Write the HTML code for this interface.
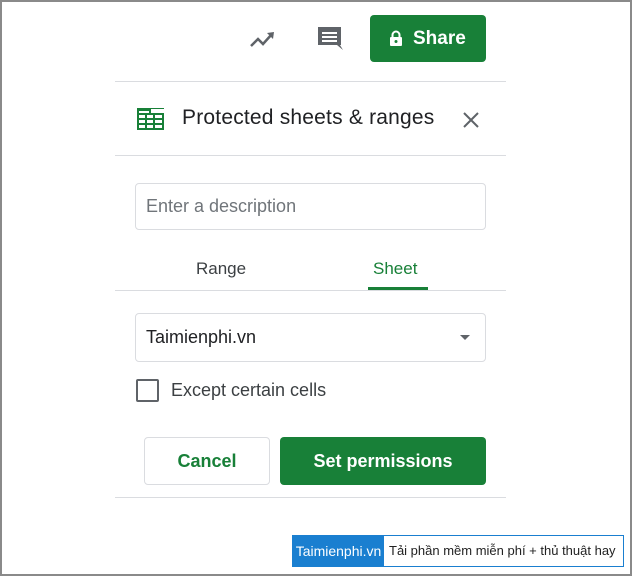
<!DOCTYPE html>
<html><head><style>
body{margin:0;width:632px;height:576px;position:relative;background:#fff;font-family:"Liberation Sans",sans-serif;overflow:hidden}
.frame{position:absolute;left:0;top:0;width:628px;height:572px;border:2px solid #8a8a8a}
.abs{position:absolute;white-space:nowrap}
.line{position:absolute;left:115px;width:391px;height:1px;background:#dadce0}
</style></head><body>
<div class="frame"></div>
<svg class="abs" style="left:249px;top:29px" width="28" height="20" viewBox="0 0 28 20"><path d="M2 17 L9 10 L14 15 L23 5" fill="none" stroke="#5f6368" stroke-width="2.5"/><path d="M18 4 L25 3 L24 10 Z" fill="#5f6368"/></svg>
<svg class="abs" style="left:316px;top:26px" width="28" height="26" viewBox="0 0 28 26"><path d="M2 1 H25 V19 H24 L27 24 L21 19 H2 Z" fill="#5f6368"/><rect x="6" y="6" width="15" height="2" fill="#fff"/><rect x="6" y="10" width="15" height="2" fill="#fff"/><rect x="6" y="14" width="15" height="2" fill="#fff"/></svg>
<div class="abs" style="left:370px;top:15px;width:116px;height:47px;background:#188038;border-radius:4px;color:#fff;font-weight:bold;font-size:19px;line-height:47px"><svg class="abs" style="left:19px;top:15px" width="14" height="17" viewBox="0 0 14 17"><path d="M3.5 7 V5 a3.5 3.5 0 0 1 7 0 V7" fill="none" stroke="#fff" stroke-width="2"/><rect x="1" y="7" width="12" height="9" rx="1" fill="#fff"/><circle cx="7" cy="11.5" r="1.5" fill="#188038"/></svg><span style="position:absolute;left:43px">Share</span></div>
<div class="line" style="top:81px"></div>
<svg class="abs" style="left:137px;top:108px" width="27" height="22" viewBox="0 0 27 22"><rect x="0" y="0" width="27" height="22" fill="#188038"/><g fill="#fff"><rect x="2" y="3" width="10" height="2"/><rect x="2" y="7" width="6" height="3"/><rect x="10" y="7" width="6" height="3"/><rect x="18" y="7" width="7" height="3"/><rect x="2" y="12" width="6" height="3"/><rect x="10" y="12" width="6" height="3"/><rect x="18" y="12" width="7" height="3"/><rect x="2" y="17" width="6" height="3"/><rect x="10" y="17" width="6" height="3"/><rect x="18" y="17" width="7" height="3"/></g><rect x="14" y="0" width="13" height="5" fill="#fff"/><rect x="14" y="0" width="13" height="1" fill="#188038"/></svg>
<div class="abs" style="left:182px;top:106px;font-size:21px;letter-spacing:0.2px;color:#202124">Protected sheets &amp; ranges</div>
<svg class="abs" style="left:463px;top:112px" width="16" height="16" viewBox="0 0 16 16"><path d="M1 1 L15 15 M15 1 L1 15" stroke="#5f6368" stroke-width="2"/></svg>
<div class="line" style="top:155px"></div>
<div class="abs" style="left:135px;top:183px;width:349px;height:45px;border:1px solid #dadce0;border-radius:4px"></div>
<div class="abs" style="left:146px;top:196px;font-size:18px;color:#70757a">Enter a description</div>
<div class="abs" style="left:196px;top:259px;font-size:17px;color:#3c4043">Range</div>
<div class="abs" style="left:373px;top:259px;font-size:17px;color:#188038">Sheet</div>
<div class="abs" style="left:368px;top:287px;width:60px;height:3px;background:#188038"></div>
<div class="line" style="top:290px"></div>
<div class="abs" style="left:135px;top:313px;width:349px;height:47px;border:1px solid #dadce0;border-radius:4px"></div>
<div class="abs" style="left:146px;top:327px;font-size:18px;color:#202124">Taimienphi.vn</div>
<div class="abs" style="left:460px;top:335px;border-left:5px solid transparent;border-right:5px solid transparent;border-top:5px solid #5f6368"></div>
<div class="abs" style="left:136px;top:379px;width:19px;height:19px;border:2px solid #5f6368;border-radius:2px"></div>
<div class="abs" style="left:171px;top:380px;font-size:18px;color:#3c4043">Except certain cells</div>
<div class="abs" style="left:144px;top:437px;width:124px;height:46px;border:1px solid #dadce0;border-radius:4px;color:#188038;font-weight:bold;font-size:18px;line-height:46px;text-align:center">Cancel</div>
<div class="abs" style="left:280px;top:437px;width:206px;height:48px;background:#188038;border-radius:4px;color:#fff;font-weight:bold;font-size:18px;line-height:48px;text-align:center">Set permissions</div>
<div class="line" style="top:497px"></div>
<div class="abs" style="left:292px;top:535px;width:330px;height:30px;border:1px solid #1a7fd0;background:#fff;font-size:14px;line-height:30px;overflow:hidden">
<span style="position:absolute;left:0;top:0;width:91px;height:30px;background:#1a7fd0;color:#fff;text-align:center">Taimienphi.vn</span><span style="position:absolute;left:96px;top:0;color:#222;font-size:13px">Tải phần mềm miễn phí + thủ thuật hay</span></div>
</body></html>
